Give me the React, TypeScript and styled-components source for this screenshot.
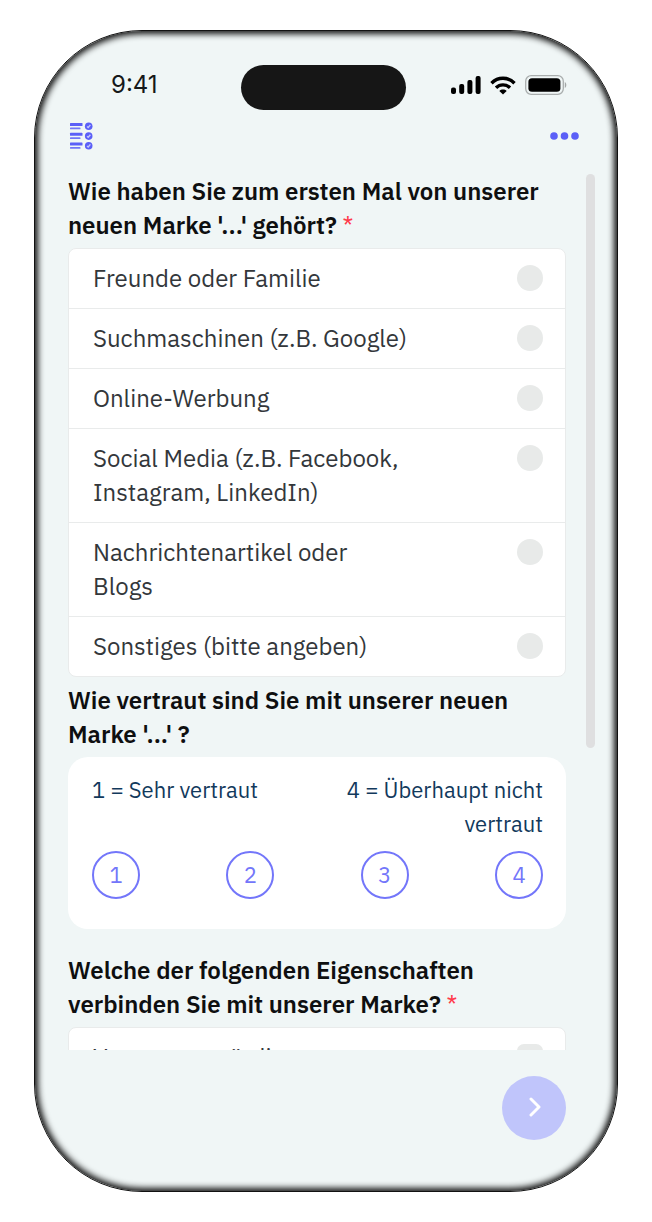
import React from "react";
import styled, { createGlobalStyle } from "styled-components";

const accent = "#5b5ff7";
const surface = "#f0f6f6";

const GlobalStyle = createGlobalStyle`
  *, *::before, *::after { box-sizing: border-box; }
  body { margin: 0; background: #fff; }
  body, button, input { font-family: "IBM Plex Sans", Inter, "Liberation Sans", sans-serif; }
`;

const Page = styled.div`
  display: flex;
  height: 100vh;
  padding: 30px 34px;
`;

const Phone = styled.div`
  flex: 1;
  min-width: 0;
  display: flex;
  flex-direction: column;
  background: ${surface};
  border: 1px solid #111;
  border-radius: 108px;
  box-shadow: inset 0 0 6px 3px #111;
  overflow: hidden;
`;

const StatusBar = styled.div`
  display: grid;
  grid-template-columns: 1fr 165px 1fr;
  align-items: center;
  padding: 34px 50px 0 44px;
  height: 79px;
`;

const Time = styled.time`
  padding-left: 32px;
  font: 400 24px/28px Inter, sans-serif;
  color: #16181a;
  margin-bottom: 5px;
`;

const Island = styled.div`
  height: 45px;
  border-radius: 23px;
  background: #161616;
`;

const Indicators = styled.div`
  display: flex;
  justify-content: flex-end;
  align-items: center;
  gap: 9px;
  margin-bottom: 5px;
`;

const Toolbar = styled.header`
  display: flex;
  justify-content: space-between;
  align-items: center;
  height: 52px;
  padding: 0 38px 0 34px;
`;

const IconButton = styled.button`
  display: flex;
  padding: 0;
  border: 0;
  background: none;
  color: ${accent};
`;

const Body = styled.main`
  flex: 1;
  min-height: 0;
  display: flex;
  gap: 20px;
  padding: 12px 22px 0 33px;
`;

const Form = styled.form`
  flex: 1;
  min-width: 0;
  overflow: hidden;
`;

const ScrollTrack = styled.div`
  width: 9px;
`;

const ScrollThumb = styled.div`
  height: 65.5%;
  border-radius: 5px;
  background: #dfdfe0;
`;

const Question = styled.fieldset<{ $after: number }>`
  margin: 0 0 ${(p) => p.$after}px;
  padding: 0;
  border: 0;
  min-width: 0;
`;

const Title = styled.legend`
  padding: 0;
  margin-bottom: 6px;
  font-size: 24px;
  font-weight: 600;
  line-height: 34px;
  color: #0e0f10;
  white-space: pre-line;
`;

const Required = styled.span`
  font-weight: 400;
  color: #ff3b4b;
`;

const OptionList = styled.div`
  border: 1px solid #e9ebeb;
  border-radius: 8px;
  background: #fff;
`;

const Option = styled.label`
  display: flex;
  justify-content: space-between;
  align-items: flex-start;
  padding: 12px 22px 13px 24px;
  font-size: 24px;
  line-height: 34px;
  color: #33373b;
  white-space: pre-line;
  & + & { border-top: 1px solid #e9ebeb; }
`;

const Mark = styled.input<{ $square?: boolean }>`
  appearance: none;
  flex: none;
  width: 26px;
  height: 26px;
  margin: 4px 0;
  border-radius: ${(p) => (p.$square ? "7px" : "50%")};
  background: #e8eae9;
`;

const ScaleCard = styled.div`
  padding: 16px 23px 30px 24px;
  border-radius: 20px;
  background: #fff;
`;

const ScaleLabels = styled.div`
  display: flex;
  justify-content: space-between;
  margin-bottom: 10px;
  font-size: 22px;
  line-height: 34px;
  color: #12395c;
`;

const ScaleLabel = styled.span<{ $end?: boolean }>`
  white-space: pre-line;
  text-align: ${(p) => (p.$end ? "right" : "left")};
`;

const ScaleRow = styled.div`
  display: flex;
  justify-content: space-between;
`;

const ScalePoint = styled.label`
  display: grid;
  place-items: center;
  width: 48px;
  height: 48px;
  border: 2px solid #7376fa;
  border-radius: 50%;
  font-size: 22px;
  line-height: 44px;
  color: #7376fa;
  & > * { grid-area: 1 / 1; }
`;

const ScaleInput = styled.input`
  appearance: none;
  width: 44px;
  height: 44px;
  margin: 0;
  border-radius: 50%;
`;

const Footer = styled.footer`
  display: flex;
  justify-content: flex-end;
  padding: 26px 51px 51px;
`;

const NextButton = styled.button`
  display: grid;
  place-items: center;
  width: 64px;
  height: 64px;
  padding: 0;
  border: 0;
  border-radius: 50%;
  background: #c0c5fb;
`;

const ListIcon = () => (
  <svg width="25" height="28" viewBox="0 0 25 28" fill="currentColor" aria-hidden="true">
    {[0.5, 10.3, 20] .map((y) => (
      <g key={y} transform={`translate(0 ${y})`}>
        <rect x="1" y="0.5" width="12.5" height="3" rx="0.6" />
        <rect x="1" y="5" width="10.5" height="1.8" rx="0.6" opacity="0.85" />
        <circle cx="19.7" cy="3.8" r="3.8" />
        <path d="M18 4l1.2 1 2.2-2.6" fill="none" stroke="#c3c6fd" strokeWidth="1.4" />
      </g>
    ))}
  </svg>
);

const DotsIcon = () => (
  <svg width="29" height="9" viewBox="0 0 29 9" fill="currentColor" aria-hidden="true">
    <circle cx="4" cy="4" r="3.8" />
    <circle cx="14.5" cy="4" r="3.8" />
    <circle cx="25" cy="4" r="3.8" />
  </svg>
);

const SignalIcon = () => (
  <svg width="30" height="18" viewBox="0 0 30 18" aria-hidden="true">
    <rect x="0" y="11.5" width="5" height="6.5" rx="2" />
    <rect x="8.2" y="8" width="5" height="10" rx="2" />
    <rect x="16.4" y="4" width="5" height="14" rx="2" />
    <rect x="24.6" y="0" width="5" height="18" rx="2" />
  </svg>
);

const WifiIcon = () => (
  <svg width="26" height="19" viewBox="0 0 26 19" fill="none" stroke="#000" strokeWidth="3.4" aria-hidden="true">
    <path d="M1.5 7.2C8 .6 18 .6 24.5 7.2" />
    <path d="M6 11.8C10 7.9 16 7.9 20 11.8" />
    <path d="M13 18.5L9.3 14.9C11.4 13.1 14.6 13.1 16.7 14.9Z" fill="#000" stroke="none" />
  </svg>
);

const BatteryIcon = () => (
  <svg width="42" height="20" viewBox="0 0 42 20" aria-hidden="true">
    <rect x="0.7" y="0.7" width="37.6" height="18.6" rx="5.5" fill="none" stroke="#a9adad" strokeWidth="1.3" />
    <rect x="3.4" y="3.2" width="32" height="13.6" rx="3.6" />
    <path d="M39.8 7v6c2-.7 2-5.3 0-6z" fill="#a3a7a7" />
  </svg>
);

const sources = [
  "Freunde oder Familie",
  "Suchmaschinen (z.B. Google)",
  "Online-Werbung",
  "Social Media (z.B. Facebook,\nInstagram, LinkedIn)",
  "Nachrichtenartikel oder\nBlogs",
  "Sonstiges (bitte angeben)",
];

export default function App() {
  return (
    <>
      <GlobalStyle />
      <Page>
        <Phone>
          <StatusBar>
            <Time>9:41</Time>
            <Island />
            <Indicators>
              <SignalIcon />
              <WifiIcon />
              <BatteryIcon />
            </Indicators>
          </StatusBar>
          <Toolbar>
            <IconButton type="button" aria-label="Fragenliste"><ListIcon /></IconButton>
            <IconButton type="button" aria-label="Menü"><DotsIcon /></IconButton>
          </Toolbar>
          <Body>
            <Form>
              <Question $after={6}>
                <Title>
                  {"Wie haben Sie zum ersten Mal von unserer\nneuen Marke '...' gehört? "}
                  <Required>*</Required>
                </Title>
                <OptionList>
                  {sources.map((text) => (
                    <Option key={text}>
                      <span>{text}</span>
                      <Mark type="radio" name="source" />
                    </Option>
                  ))}
                </OptionList>
              </Question>
              <Question $after={24}>
                <Title>{"Wie vertraut sind Sie mit unserer neuen\nMarke '...' ?"}</Title>
                <ScaleCard>
                  <ScaleLabels>
                    <ScaleLabel>1 = Sehr vertraut</ScaleLabel>
                    <ScaleLabel $end>{"4 = Überhaupt nicht\nvertraut"}</ScaleLabel>
                  </ScaleLabels>
                  <ScaleRow>
                    {[1, 2, 3, 4].map((n) => (
                      <ScalePoint key={n}>
                        <ScaleInput type="radio" name="familiarity" value={n} />
                        <span>{n}</span>
                      </ScalePoint>
                    ))}
                  </ScaleRow>
                </ScaleCard>
              </Question>
              <Question $after={0}>
                <Title>
                  {"Welche der folgenden Eigenschaften\nverbinden Sie mit unserer Marke? "}
                  <Required>*</Required>
                </Title>
                <OptionList>
                  <Option>
                    <span>Vertrauenswürdig</span>
                    <Mark type="checkbox" $square />
                  </Option>
                </OptionList>
              </Question>
            </Form>
            <ScrollTrack><ScrollThumb /></ScrollTrack>
          </Body>
          <Footer>
            <NextButton type="button" aria-label="Weiter">
              <svg width="14" height="22" viewBox="0 0 14 22" fill="none" stroke="#fff" strokeWidth="3" strokeLinecap="round" strokeLinejoin="round" aria-hidden="true">
                <path d="M4 2l8 8-8 8" />
              </svg>
            </NextButton>
          </Footer>
        </Phone>
      </Page>
    </>
  );
}
